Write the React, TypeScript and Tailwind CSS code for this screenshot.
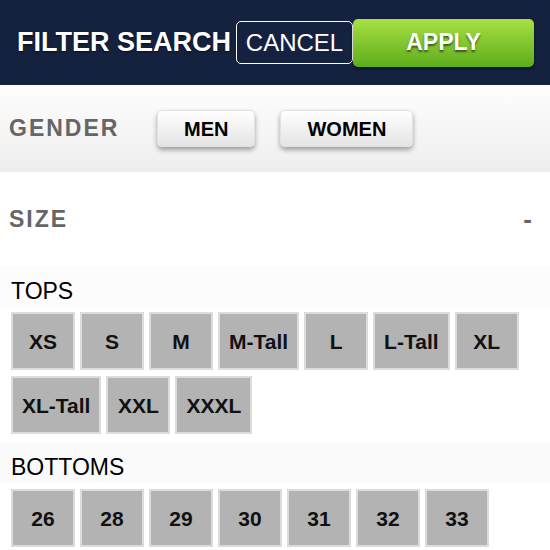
import React from "react";

const TOPS = ["XS", "S", "M", "M-Tall", "L", "L-Tall", "XL", "XL-Tall", "XXL", "XXXL"];
const BOTTOMS = ["26", "28", "29", "30", "31", "32", "33"];

function SizeTile({ label }: { label: string }) {
  return (
    <button className="h-[58px] min-w-[64px] px-[9px] flex items-center justify-center bg-[#b3b3b3] border-2 border-[#dcdcdc] text-[21px] font-bold text-[#111] leading-none">
      {label}
    </button>
  );
}

function GenderButton({ label }: { label: string }) {
  return (
    <button className="h-[37px] px-[26px] rounded-[5px] border border-[#e2e2e2] bg-gradient-to-b from-white to-[#e4e4e4] shadow-[0_3px_5px_rgba(0,0,0,0.35)] text-[20px] font-bold text-black leading-none">
      {label}
    </button>
  );
}

export default function App() {
  return (
    <div className="w-[550px] h-[550px] overflow-hidden bg-white font-['Liberation_Sans',Arial,sans-serif]">
      {/* Header */}
      <div className="h-[85px] bg-[#14213f] flex items-center pl-[17px] pr-[16px]">
        <h1 className="w-[219px] text-[27px] font-bold text-white leading-none whitespace-nowrap [text-shadow:0_1px_2px_rgba(0,0,0,0.6)]">
          FILTER SEARCH
        </h1>
        <button className="w-[117px] h-[43px] rounded-[5px] border-[1.5px] border-white text-white text-[24px] leading-none">
          CANCEL
        </button>
        <button className="w-[181px] h-[48px] rounded-[5px] bg-gradient-to-b from-[#a6e142] to-[#5eac1c] shadow-[0_2px_3px_rgba(0,0,0,0.4)] text-white text-[23px] font-bold leading-none [text-shadow:0_2px_2px_rgba(0,0,0,0.55)]">
          APPLY
        </button>
      </div>

      {/* Gender */}
      <div className="h-[87px] flex items-center pl-[9px] bg-gradient-to-b from-[#fefefe] to-[#eeeeee]">
        <span className="w-[148px] text-[23px] font-bold tracking-[2px] text-[#666] leading-none">GENDER</span>
        <div className="flex gap-[25px]">
          <GenderButton label="MEN" />
          <GenderButton label="WOMEN" />
        </div>
      </div>

      {/* Size */}
      <div className="h-[94px] flex items-center justify-between pl-[9px] pr-[18px]">
        <span className="text-[23px] font-bold tracking-[2px] text-[#666] leading-none">SIZE</span>
        <span className="text-[26px] font-bold text-[#666] leading-none">-</span>
      </div>

      <div className="h-[42px] pt-[14px] pl-[11px] bg-[#fcfcfc]">
        <div className="text-[23px] text-black leading-none">TOPS</div>
      </div>
      <div className="pt-[4px] pl-[11px] flex flex-wrap gap-x-[5px] gap-y-[6px] w-[530px]">
        {TOPS.map((s) => (
          <SizeTile key={s} label={s} />
        ))}
      </div>

      <div className="mt-[9px] h-[40px] pt-[13px] pl-[11px] bg-[#fafafa]">
        <div className="text-[23px] text-black leading-none">BOTTOMS</div>
      </div>
      <div className="mt-[6px] pl-[11px] flex flex-wrap gap-x-[5px] gap-y-[6px]">
        {BOTTOMS.map((s) => (
          <SizeTile key={s} label={s} />
        ))}
      </div>
    </div>
  );
}
